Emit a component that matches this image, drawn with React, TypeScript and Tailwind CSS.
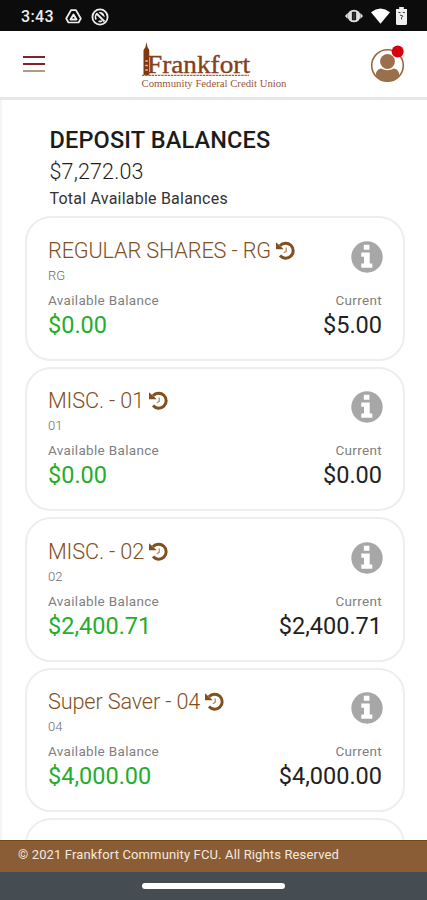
type Account = {
  name: string
  suffix: string
  available: string
  current: string
}

const accounts: Account[] = [
  { name: 'REGULAR SHARES - RG', suffix: 'RG', available: '$0.00', current: '$5.00' },
  { name: 'MISC. - 01', suffix: '01', available: '$0.00', current: '$0.00' },
  { name: 'MISC. - 02', suffix: '02', available: '$2,400.71', current: '$2,400.71' },
  { name: 'Super Saver - 04', suffix: '04', available: '$4,000.00', current: '$4,000.00' },
]

function StatusBar() {
  return (
    <div className="flex h-[31px] shrink-0 items-center justify-between bg-[#0c0c0c] pl-[21px] pr-[20px] text-[#eeeeee]">
      <div className="flex items-center pt-[2px]">
        <span className="w-[44px] text-[16px] leading-none font-medium tracking-[0.4px]">3:43</span>
        <svg className="h-[17px] w-[17px]" viewBox="0 0 17 17" fill="none" stroke="currentColor" strokeLinejoin="round">
          <path d="M6 2.2h5l4.8 8.3-2.2 4H3.4l-2.2-4z" strokeWidth="1.7" />
          <path d="M8.500 6.500l3 5h-6z" strokeWidth="1.9" />
        </svg>
        <svg className="ml-[9px] h-[18px] w-[18px]" viewBox="0 0 18 18" fill="none" stroke="currentColor">
          <circle cx="9" cy="9" r="7.600" strokeWidth="1.8" />
          <path d="M5.200 11.500A4.500 4.500 0 0 1 6.200 5.500M7.500 13.200a4.500 4.500 0 0 0 3.500-.2" strokeWidth="1.7" />
          <path d="M5.500 5.500l8 8" strokeWidth="2" />
          <path d="M7.500 4.200q5.500-1 6.300 5.300z" fill="currentColor" stroke="none" />
        </svg>
      </div>
      <div className="flex items-center">
        <svg className="h-[14px] w-[18px]" viewBox="0 0 18 14">
          <path d="M0 7l2.500-3v6zM18 7l-2.500-3v6z" fill="#dddddd" />
          <ellipse cx="9" cy="7" rx="6.600" ry="6.300" fill="#dddddd" />
          <rect x="6.900" y="2.800" width="4.200" height="8.400" rx="0.800" fill="#1b1b1b" />
          <path d="M9 4v6" stroke="#555555" strokeWidth="0.8" />
        </svg>
        <svg className="ml-[8px] h-[16px] w-[19px]" viewBox="0 0 19 16">
          <path d="M0 4.200Q9.500-3.200 19 4.200L9.500 15.800z" fill="#ffffff" />
        </svg>
        <svg className="ml-[6px] h-[18px] w-[11px]" viewBox="0 0 11 18">
          <path d="M3.200 0h4.600v2H11v14.500q0 1.500-1.500 1.500h-8Q0 18 0 16.500V2h3.200z" fill="#eeeeee" />
          <path d="M2.500 5.500h2M6.800 5.500h2M4 8l3 1.200-1.500 1.500v1.600" fill="none" stroke="#333333" />
        </svg>
      </div>
    </div>
  )
}

function Logo() {
  return (
    <svg className="h-[50px] w-[150px]" viewBox="0 0 150 50">
      {/* clock tower standing in front of the F */}
      <path d="M6.500 0l1 5 1.800 3v25H3.500V8l2-3z" fill="#823711" />
      <path d="M5.300 19h2.500M5.300 23.500h2.500M5.300 28h2.500" stroke="#e2c3a8" strokeWidth="1.300" />
      <path d="M2 33.300h107" stroke="#a3664a" strokeWidth="1.300" strokeDasharray="2.500 0.700" />
      <text x="7" y="31" textLength="103" lengthAdjust="spacingAndGlyphs" fontFamily="'Liberation Serif', serif" fontSize="25" fill="#86401c" stroke="#86401c" strokeWidth="0.350">
        Frankfort
      </text>
      <text x="1.500" y="45" textLength="145" lengthAdjust="spacingAndGlyphs" fontFamily="'Liberation Serif', serif" fontSize="9.500" fill="#96593a">
        Community Federal Credit Union
      </text>
    </svg>
  )
}

function Header() {
  return (
    <header className="flex h-[69px] shrink-0 items-center justify-between border-b-[3px] border-[#e8e6e6] bg-white pl-[23px] pr-[22px]">
      <button className="flex w-[22px] flex-col gap-[5px]" aria-label="Menu">
        <span className="h-[2px] bg-[#7d2424]" />
        <span className="h-[2px] bg-[#7d2424]" />
        <span className="h-[2px] bg-[#b29a86]" />
      </button>
      <div className="mr-auto pl-[95px] pt-[6px]">
        <Logo />
      </div>
      <svg className="h-[38px] w-[35px]" viewBox="0 0 35 38">
        <circle cx="17.500" cy="20.500" r="15.800" fill="none" stroke="#966a3f" strokeWidth="1.600" />
        <circle cx="17.500" cy="16.500" r="7.400" fill="#99704b" />
        <path d="M5.500 31Q6 24 11 23.500q6.500 3.500 13 0 5 .5 5.500 7.500A15.800 15.800 0 0 1 5.500 31z" fill="#99704b" />
        <circle cx="27.700" cy="6.500" r="6" fill="#d8000c" />
      </svg>
    </header>
  )
}

function HistoryIcon() {
  return (
    <svg className="mb-[1px] h-[19px] w-[19px]" viewBox="0 0 19 19" fill="none">
      <path d="M4 4.800A7.500 7.500 0 1 1 4 14.600" stroke="currentColor" strokeWidth="3" />
      <path d="M0 1.200L7.800 8.200H0z" fill="currentColor" />
      <path d="M10.200 6.500v3.800l-2.400 1.500" stroke="#b08c6b" strokeWidth="1.300" />
    </svg>
  )
}

function InfoIcon() {
  return (
    <svg className="-mr-[0.5px] mt-[4px] h-[32px] w-[32px]" viewBox="0 0 32 32">
      <circle cx="16" cy="16" r="15.700" fill="#a7a7a7" />
      <path d="M12.800 3.800h5.600v5h-5.600zM10.300 11.500h8.400v10.900h2.600v4.300h-11v-4.300h2.700v-6.600h-2.700z" fill="#ffffff" />
    </svg>
  )
}

function AccountCard({ account }: { account: Account }) {
  return (
    <div className="h-[144.5px] shrink-0 rounded-[26px] border-[2px] border-[#eeeeee] bg-white pl-[21px] pr-[21px] pt-[18.5px]">
      <div className="flex h-[50px] justify-between">
        <div>
          <div className="flex h-[28px] items-center gap-[5px] text-[#82501f]">
            <h2 className="text-[21.7px] leading-[28px] font-[350] whitespace-nowrap tracking-[-0.15px]">{account.name}</h2>
            <HistoryIcon />
          </div>
          <p className="text-[13px] leading-[21px] font-[350] text-[#6c6c6c]">{account.suffix}</p>
        </div>
        <InfoIcon />
      </div>
      <div className="mt-[2px] flex justify-between text-[13.5px] leading-[22px] tracking-[0.32px] text-[#808080]">
        <span>Available Balance</span>
        <span>Current</span>
      </div>
      <div className="flex justify-between text-[23.5px] leading-[28px]">
        <span className="text-[#24ae2b]">{account.available}</span>
        <span className="text-[#222222]">{account.current}</span>
      </div>
    </div>
  )
}

export default function App() {
  return (
    <div className="flex h-[900px] w-[427px] flex-col overflow-hidden bg-white font-['Roboto',sans-serif]">
      <StatusBar />
      <Header />
      <main className="min-h-0 flex-1 overflow-hidden border-l-[2px] border-[#f5f5f5] pl-[23px] pr-[22px]">
        <div className="h-[116px] pl-[24.5px] pt-[25px] text-[#1c1c1c]">
          <h1 className="text-[23.5px] leading-[31px] font-medium tracking-[0.15px]">DEPOSIT BALANCES</h1>
          <p className="text-[21.5px] leading-[32px] font-[350] tracking-[0.15px]">$7,272.03</p>
          <p className="text-[16px] leading-[22px] tracking-[0.22px] text-[#333333]">Total Available Balances</p>
        </div>
        <div className="flex flex-col gap-[6px]">
          {accounts.map((account) => (
            <AccountCard key={account.suffix} account={account} />
          ))}
          <div className="h-[144px] rounded-[26px] border-[2px] border-[#eeeeee]" />
        </div>
      </main>
      <footer className="h-[32px] shrink-0 border-t border-[#78460f] bg-[#8b5d36] pl-[18px] text-[13px] leading-[28px] font-[450] tracking-[0.14px] text-[#f4e9df]">
        © 2021 Frankfort Community FCU. All Rights Reserved
      </footer>
      <div className="flex h-[28px] shrink-0 items-center justify-center bg-[#454d53]">
        <div className="h-[6px] w-[143px] rounded-full bg-white" />
      </div>
    </div>
  )
}
